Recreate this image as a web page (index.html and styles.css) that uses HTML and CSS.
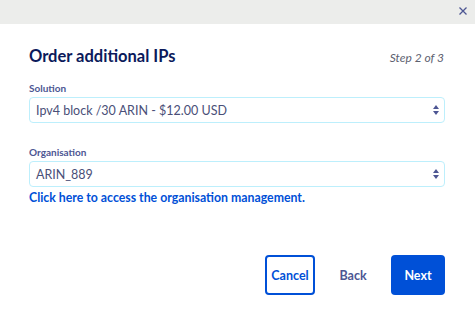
FILE: index.html
```html
<!DOCTYPE html>
<html lang="en">
<head>
<meta charset="utf-8">
<title>Order additional IPs</title>
<link rel="stylesheet" href="styles.css">
</head>
<body>
<div class="modal">
  <div class="topbar">
    <button class="close" aria-label="Close">
      <svg width="8" height="8" viewBox="0 0 8 8"><path d="M0.5 0.5L7.5 7.5M7.5 0.5L0.5 7.5" stroke="#4d5693" stroke-width="1.3" fill="none"/></svg>
    </button>
  </div>
  <div class="body">
    <div class="header">
      <h1 class="title">Order additional IPs</h1>
      <span class="step">Step 2 of 3</span>
    </div>
    <div class="field">
      <label class="label">Solution</label>
      <div class="select">
        <span class="value">Ipv4 block /30 ARIN - $12.00 USD</span>
        <svg class="arrows" width="6" height="10" viewBox="0 0 6 10"><path d="M3 0L6 4H0Z M0 6H6L3 10Z" fill="#4d5693"/></svg>
      </div>
    </div>
    <div class="field field-org">
      <label class="label">Organisation</label>
      <div class="select">
        <span class="value">ARIN_889</span>
        <svg class="arrows" width="6" height="10" viewBox="0 0 6 10"><path d="M3 0L6 4H0Z M0 6H6L3 10Z" fill="#4d5693"/></svg>
      </div>
      <a class="link" href="#">Click here to access the organisation management.</a>
    </div>
    <div class="actions">
      <button class="btn btn-cancel">Cancel</button>
      <button class="btn btn-back">Back</button>
      <button class="btn btn-next">Next</button>
    </div>
  </div>
</div>
</body>
</html>
```

FILE: styles.css
```css
* { box-sizing: border-box; }
html, body { margin: 0; padding: 0; background: #fff; }
body { font-family: Lato, "Open Sans", sans-serif; width: 475px; height: 318px; overflow: hidden; }
.modal { width: 475px; }
.topbar {
  height: 24px;
  background: #ecedeb;
  display: flex;
  justify-content: flex-end;
  align-items: center;
  padding-right: 8px;
}
.close {
  border: 0; background: transparent; padding: 0;
  width: 8px; height: 8px; display: flex; margin-top: -3px;
}
.body { padding: 0 30px 0 29px; }
.header {
  display: flex;
  justify-content: space-between;
  align-items: baseline;
  padding-top: 21px;
}
.title {
  margin: 0;
  font-size: 16.5px;
  font-weight: 700;
  color: #0b1a5b;
  line-height: 22px;
}
.step {
  font-size: 12px;
  font-style: italic;
  color: #5d6170;
  margin-right: 1px;
}
.field { display: flex; flex-direction: column; }
.label {
  font-size: 10px;
  font-weight: 700;
  color: #4d5693;
  line-height: 12px;
  margin-top: 15px;
  margin-bottom: 3px;
}
.field-org .label { margin-top: 23px; }
.select {
  height: 26px;
  border: 1px solid #bdeffc;
  border-radius: 4px;
  display: flex;
  align-items: center;
  justify-content: space-between;
  padding: 0 5px 0 6px;
}
.value { font-size: 12.5px; color: #4a4f78; }
.arrows { display: block; }
.link {
  font-size: 12.3px;
  font-weight: 700;
  color: #0050d7;
  text-decoration: none;
  line-height: 18px;
  margin-top: 2px;
}
.actions {
  display: flex;
  justify-content: flex-end;
  gap: 16px;
  margin-top: 48px;
}
.btn {
  font-family: Lato, "Open Sans", sans-serif;
  font-size: 12.5px;
  font-weight: 700;
  height: 40px;
  border-radius: 4px;
  cursor: pointer;
}
.btn-cancel {
  width: 50px; padding: 0;
  border: 2px solid #0050d7;
  background: #fff;
  color: #0050d7;
}
.btn-back {
  width: 44px; padding: 0;
  border: 0; background: transparent;
  color: #4d5693;
}
.btn-next {
  width: 54px; padding: 0;
  border: 0; background: #0050d7; color: #fff;
}
```
